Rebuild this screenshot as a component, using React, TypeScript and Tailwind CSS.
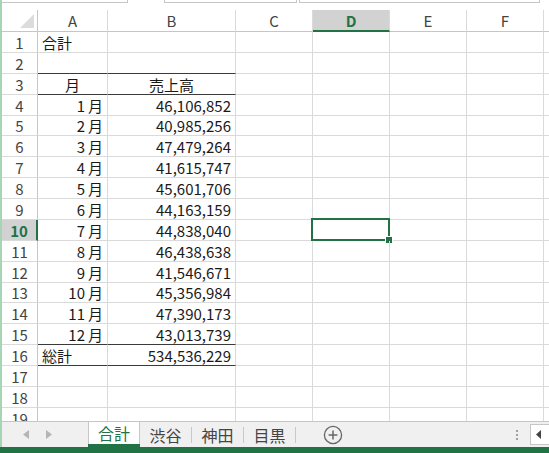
import type { ReactNode } from "react";

type Row = {
  n: number;
  h: string;
  a?: ReactNode;
  b?: string;
  aAlign?: "left" | "center" | "right";
  bAlign?: "left" | "center" | "right";
  dark?: boolean;
};

const sales: [string, string][] = [
  ["1", "46,106,852"],
  ["2", "40,985,256"],
  ["3", "47,479,264"],
  ["4", "41,615,747"],
  ["5", "45,601,706"],
  ["6", "44,163,159"],
  ["7", "44,838,040"],
  ["8", "46,438,638"],
  ["9", "41,546,671"],
  ["10", "45,356,984"],
  ["11", "47,390,173"],
  ["12", "43,013,739"],
];

const heights = [
  "h-[21px]", "h-[21px]", "h-[21px]", "h-[21px]", "h-[20px]", "h-[21px]",
  "h-[21px]", "h-[21px]", "h-[21px]", "h-[21px]", "h-[21px]", "h-[21px]",
  "h-[20px]", "h-[21px]", "h-[21px]", "h-[21px]", "h-[21px]", "h-[21px]",
];

const rows: Row[] = [
  { n: 1, h: heights[0], a: "合計", aAlign: "left" },
  { n: 2, h: heights[1], dark: true },
  { n: 3, h: heights[2], a: "月", b: "売上高", aAlign: "center", bAlign: "center", dark: true },
  ...sales.map(([m, v], i) => ({
    n: i + 4,
    h: heights[i + 3],
    a: (
      <>
        {m}
        <span className="ml-[3px]">月</span>
      </>
    ),
    b: v,
    aAlign: "right" as const,
    bAlign: "right" as const,
    dark: i === 11,
  })),
  { n: 16, h: heights[15], a: "総計", b: "534,536,229", aAlign: "left", bAlign: "right", dark: true },
  { n: 17, h: heights[16] },
  { n: 18, h: heights[17] },
  { n: 19, h: "h-[21px]" },
];

const alignClass = {
  left: "justify-start",
  center: "justify-center",
  right: "justify-end",
};

function Cell({
  w,
  dark,
  align = "left",
  children,
}: {
  w: string;
  dark?: boolean;
  align?: "left" | "center" | "right";
  children?: ReactNode;
}) {
  return (
    <div
      className={`${w} shrink-0 flex items-center px-[4px] border-r border-b border-r-[#dadada] ${
        dark ? "border-b-[#3a3a3a]" : "border-b-[#dadada]"
      } ${alignClass[align]} whitespace-nowrap text-[#1a1a1a]`}
    >
      {children}
    </div>
  );
}

function HeaderCell({ w, label, active }: { w: string; label: string; active?: boolean }) {
  return (
    <div
      className={`${w} shrink-0 flex items-center justify-center border-r border-r-[#dadada] ${
        active
          ? "bg-[#d2d2d2] border-b-2 border-b-[#217346] font-bold text-[#217346]"
          : "border-b border-b-[#c6c6c6] text-[#444]"
      }`}
    >
      {label}
    </div>
  );
}

function Sheet() {
  return (
    <div className="flex-1 overflow-hidden flex flex-col">
      {/* column headers */}
      <div className="flex h-[22px] shrink-0">
        <div className="w-[36px] shrink-0 border-r border-b border-r-[#c6c6c6] border-b-[#c6c6c6] flex items-end justify-end pr-[3px] pb-[3px]">
          <svg width="14" height="14" viewBox="0 0 14 14">
            <polygon points="14,0 14,14 0,14" fill="#dcdcdc" />
          </svg>
        </div>
        <HeaderCell w="w-[70px]" label="A" />
        <HeaderCell w="w-[128px]" label="B" />
        <HeaderCell w="w-[77px]" label="C" />
        <HeaderCell w="w-[77px]" label="D" active />
        <HeaderCell w="w-[77px]" label="E" />
        <HeaderCell w="w-[77px]" label="F" />
        <div className="flex-1 border-b border-b-[#c6c6c6]" />
      </div>

      {rows.map((r) => {
        const sel = r.n === 10;
        return (
          <div key={r.n} className={`flex shrink-0 ${r.h}`}>
            <div
              className={`w-[36px] shrink-0 flex items-center justify-center border-b border-b-[#dadada] ${
                sel
                  ? "bg-[#d2d2d2] border-r-2 border-r-[#217346] font-bold text-[#217346]"
                  : "border-r border-r-[#c6c6c6] text-[#444]"
              }`}
            >
              {r.n}
            </div>
            <Cell w="w-[70px]" dark={r.dark} align={r.aAlign}>
              {r.a}
            </Cell>
            <Cell w="w-[128px]" dark={r.dark} align={r.bAlign}>
              {r.b}
            </Cell>
            <Cell w="w-[77px]" />
            <div className="relative w-[77px] shrink-0 border-r border-b border-[#dadada]">
              {sel && (
                <div className="absolute top-[-2px] left-[-2px] right-[-1px] bottom-[-1px] border-2 border-[#217346]">
                  <div className="absolute right-[-4px] bottom-[-4px] w-[6px] h-[6px] bg-[#217346] outline outline-1 outline-white" />
                </div>
              )}
            </div>
            <Cell w="w-[77px]" />
            <Cell w="w-[77px]" />
            <div className="flex-1 border-b border-[#dadada]" />
          </div>
        );
      })}
    </div>
  );
}

function Tab({ label, active }: { label: string; active?: boolean }) {
  if (active) {
    return (
      <div className="w-[52px] shrink-0 bg-white border-x border-[#c6c6c6] flex flex-col">
        <div className="flex-1 flex items-center justify-center text-[16px] text-[#217346]">{label}</div>
        <div className="h-[3px] mx-[-1px] bg-[#217346]" />
      </div>
    );
  }
  return (
    <div className="flex items-center shrink-0">
      <div className="w-[51px] flex items-center justify-center text-[16px] text-[#444]">{label}</div>
      <div className="w-px h-[16px] bg-[#c8c8c8]" />
    </div>
  );
}

function TabBar() {
  return (
    <div className="h-[26px] shrink-0 flex border-t border-[#c6c6c6] bg-[#f0f0f0]">
      <div className="w-[86px] shrink-0 flex items-center gap-[17px] pl-[21px]">
        <svg width="6" height="9" viewBox="0 0 6 9">
          <polygon points="6,0 6,9 0,4.5" fill="#b5b5b5" />
        </svg>
        <svg width="6" height="9" viewBox="0 0 6 9">
          <polygon points="0,0 0,9 6,4.5" fill="#b5b5b5" />
        </svg>
      </div>
      <Tab label="合計" active />
      <Tab label="渋谷" />
      <Tab label="神田" />
      <Tab label="目黒" />
      <div className="pl-[27px] flex items-center">
        <svg width="20" height="20" viewBox="0 0 20 20">
          <circle cx="10" cy="10" r="8.6" fill="none" stroke="#666" strokeWidth="1.3" />
          <path d="M10 5.6v8.8M5.6 10h8.8" stroke="#666" strokeWidth="1.5" />
        </svg>
      </div>
      <div className="flex-1" />
      <div className="flex flex-col justify-center gap-[2px] pr-[12px]">
        <div className="w-[2px] h-[2px] bg-[#a0a0a0]" />
        <div className="w-[2px] h-[2px] bg-[#a0a0a0]" />
        <div className="w-[2px] h-[2px] bg-[#a0a0a0]" />
      </div>
      <div className="w-[19px] my-[2px] bg-white border border-r-0 border-[#c6c6c6] flex items-center pl-[5px]">
        <svg width="5" height="9" viewBox="0 0 5 9">
          <polygon points="5,0 5,9 0,4.5" fill="#444" />
        </svg>
      </div>
    </div>
  );
}

function TopStrip() {
  return (
    <div className="h-[10px] shrink-0 bg-white flex items-start">
      <div className="w-[126px] h-[3px] bg-white border-r border-b border-[#c6c6c6]" />
      <div className="w-[36px]" />
      <div className="w-[133px] h-[3px] bg-white border-x border-b border-[#c6c6c6]" />
      <div className="w-[2px]" />
      <div className="w-[241px] h-[3px] bg-white border-x border-b border-[#c6c6c6]" />
    </div>
  );
}

export default function App() {
  return (
    <div className="w-[549px] h-[453px] overflow-hidden bg-white flex flex-col font-['Noto_Sans_CJK_JP',sans-serif] text-[15px] leading-none">
      <div className="flex-1 flex min-h-0">
        <div className="w-[2px] shrink-0 bg-[#a6d5b6]" />
        <div className="flex-1 min-w-0 flex flex-col">
          <TopStrip />
          <Sheet />
          <TabBar />
        </div>
      </div>
      <div className="h-[6px] shrink-0 bg-[#217346]" />
    </div>
  );
}
